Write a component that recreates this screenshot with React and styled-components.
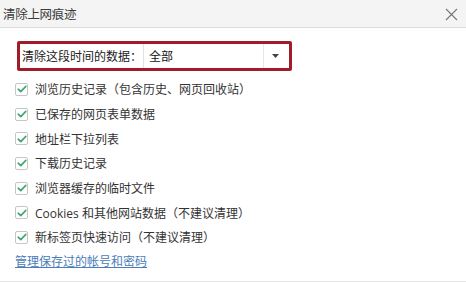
import React from "react";
import styled, { createGlobalStyle } from "styled-components";

const Global = createGlobalStyle`
  html, body { margin: 0; padding: 0; background: #ffffff; }
  body { font-family: "Open Sans", "Noto Sans CJK SC", sans-serif; }
`;

const Dialog = styled.div`
  width: 466px;
  height: 282px;
  box-sizing: border-box;
  background: #fff;
  display: flex;
  flex-direction: column;
  border-bottom: 1px solid #e6e6e6;
  overflow: hidden;
`;

const TitleBar = styled.div`
  height: 28px;
  flex: none;
  box-sizing: border-box;
  background: #f4f4f4;
  border-bottom: 1px solid #dcdcdc;
  display: flex;
  align-items: center;
  justify-content: space-between;
  padding: 0 8px 0 3px;
`;

const Title = styled.div`
  font-size: 12.5px;
  color: #3a3a3a;
  letter-spacing: -0.3px;
`;

const Close = styled.div`
  width: 14px;
  height: 14px;
  display: flex;
  align-items: center;
  justify-content: center;
  margin-top: 1px;
`;

const Body = styled.div`
  padding: 13px 0 0 15px;
  display: flex;
  flex-direction: column;
`;

const RangeBox = styled.div`
  width: 275px;
  height: 30px;
  box-sizing: border-box;
  margin-left: 2px;
  border: 3px solid #a11c2b;
  border-radius: 2px;
  display: flex;
  align-items: center;
  padding: 0 2px 0 2px;
`;

const RangeLabel = styled.div`
  font-size: 12px;
  color: #222;
  white-space: nowrap;
  width: 121px;
  flex: none;
`;

const Select = styled.div`
  flex: 1;
  height: 24px;
  box-sizing: border-box;
  border-left: 1px solid #e2e2e2;
  background: #fff;
  display: flex;
  align-items: center;
`;

const SelectValue = styled.div`
  flex: 1;
  font-size: 12px;
  color: #111;
  padding-left: 5px;
`;

const SelectArrow = styled.div`
  width: 23px;
  height: 100%;
  border-left: 1px solid #e6e6e6;
  display: flex;
  align-items: center;
  justify-content: center;
`;

const List = styled.div`
  display: flex;
  flex-direction: column;
  margin-top: 6px;
`;

const Row = styled.label`
  height: 24.7px;
  display: flex;
  align-items: center;
  gap: 7px;
  font-size: 12px;
  color: #333;
  white-space: nowrap;
`;

const Box = styled.span`
  width: 13px;
  height: 13px;
  box-sizing: border-box;
  border: 1px solid #c6c6c6;
  border-radius: 2px;
  background: #fff;
  display: flex;
  align-items: center;
  justify-content: center;
  flex: none;
`;

const Link = styled.a`
  margin-top: 2px;
  font-size: 12px;
  color: #4b7cb8;
  text-decoration: underline;
  cursor: pointer;
  align-self: flex-start;
`;

const items = [
  "浏览历史记录（包含历史、网页回收站）",
  "已保存的网页表单数据",
  "地址栏下拉列表",
  "下载历史记录",
  "浏览器缓存的临时文件",
  "Cookies 和其他网站数据（不建议清理）",
  "新标签页快速访问（不建议清理）",
];

function Check() {
  return (
    <Box>
      <svg width="10" height="8" viewBox="0 0 10 8">
        <path d="M1.2 4.2 L3.8 6.6 L8.8 1.4" fill="none" stroke="#3ea56e" strokeWidth="1.6" strokeLinecap="round" strokeLinejoin="round" />
      </svg>
    </Box>
  );
}

export default function App() {
  return (
    <Dialog>
      <Global />
      <TitleBar>
        <Title>清除上网痕迹</Title>
        <Close>
          <svg width="13" height="13" viewBox="0 0 13 13">
            <path d="M1 1 L12 12 M12 1 L1 12" stroke="#777" strokeWidth="1.1" />
          </svg>
        </Close>
      </TitleBar>
      <Body>
        <RangeBox>
          <RangeLabel>清除这段时间的数据：</RangeLabel>
          <Select>
            <SelectValue>全部</SelectValue>
            <SelectArrow>
              <svg width="7" height="4" viewBox="0 0 7 4">
                <path d="M0 0 L7 0 L3.5 4 Z" fill="#444" />
              </svg>
            </SelectArrow>
          </Select>
        </RangeBox>
        <List>
          {items.map((t) => (
            <Row key={t}>
              <Check />
              {t}
            </Row>
          ))}
        </List>
        <Link>管理保存过的帐号和密码</Link>
      </Body>
    </Dialog>
  );
}
